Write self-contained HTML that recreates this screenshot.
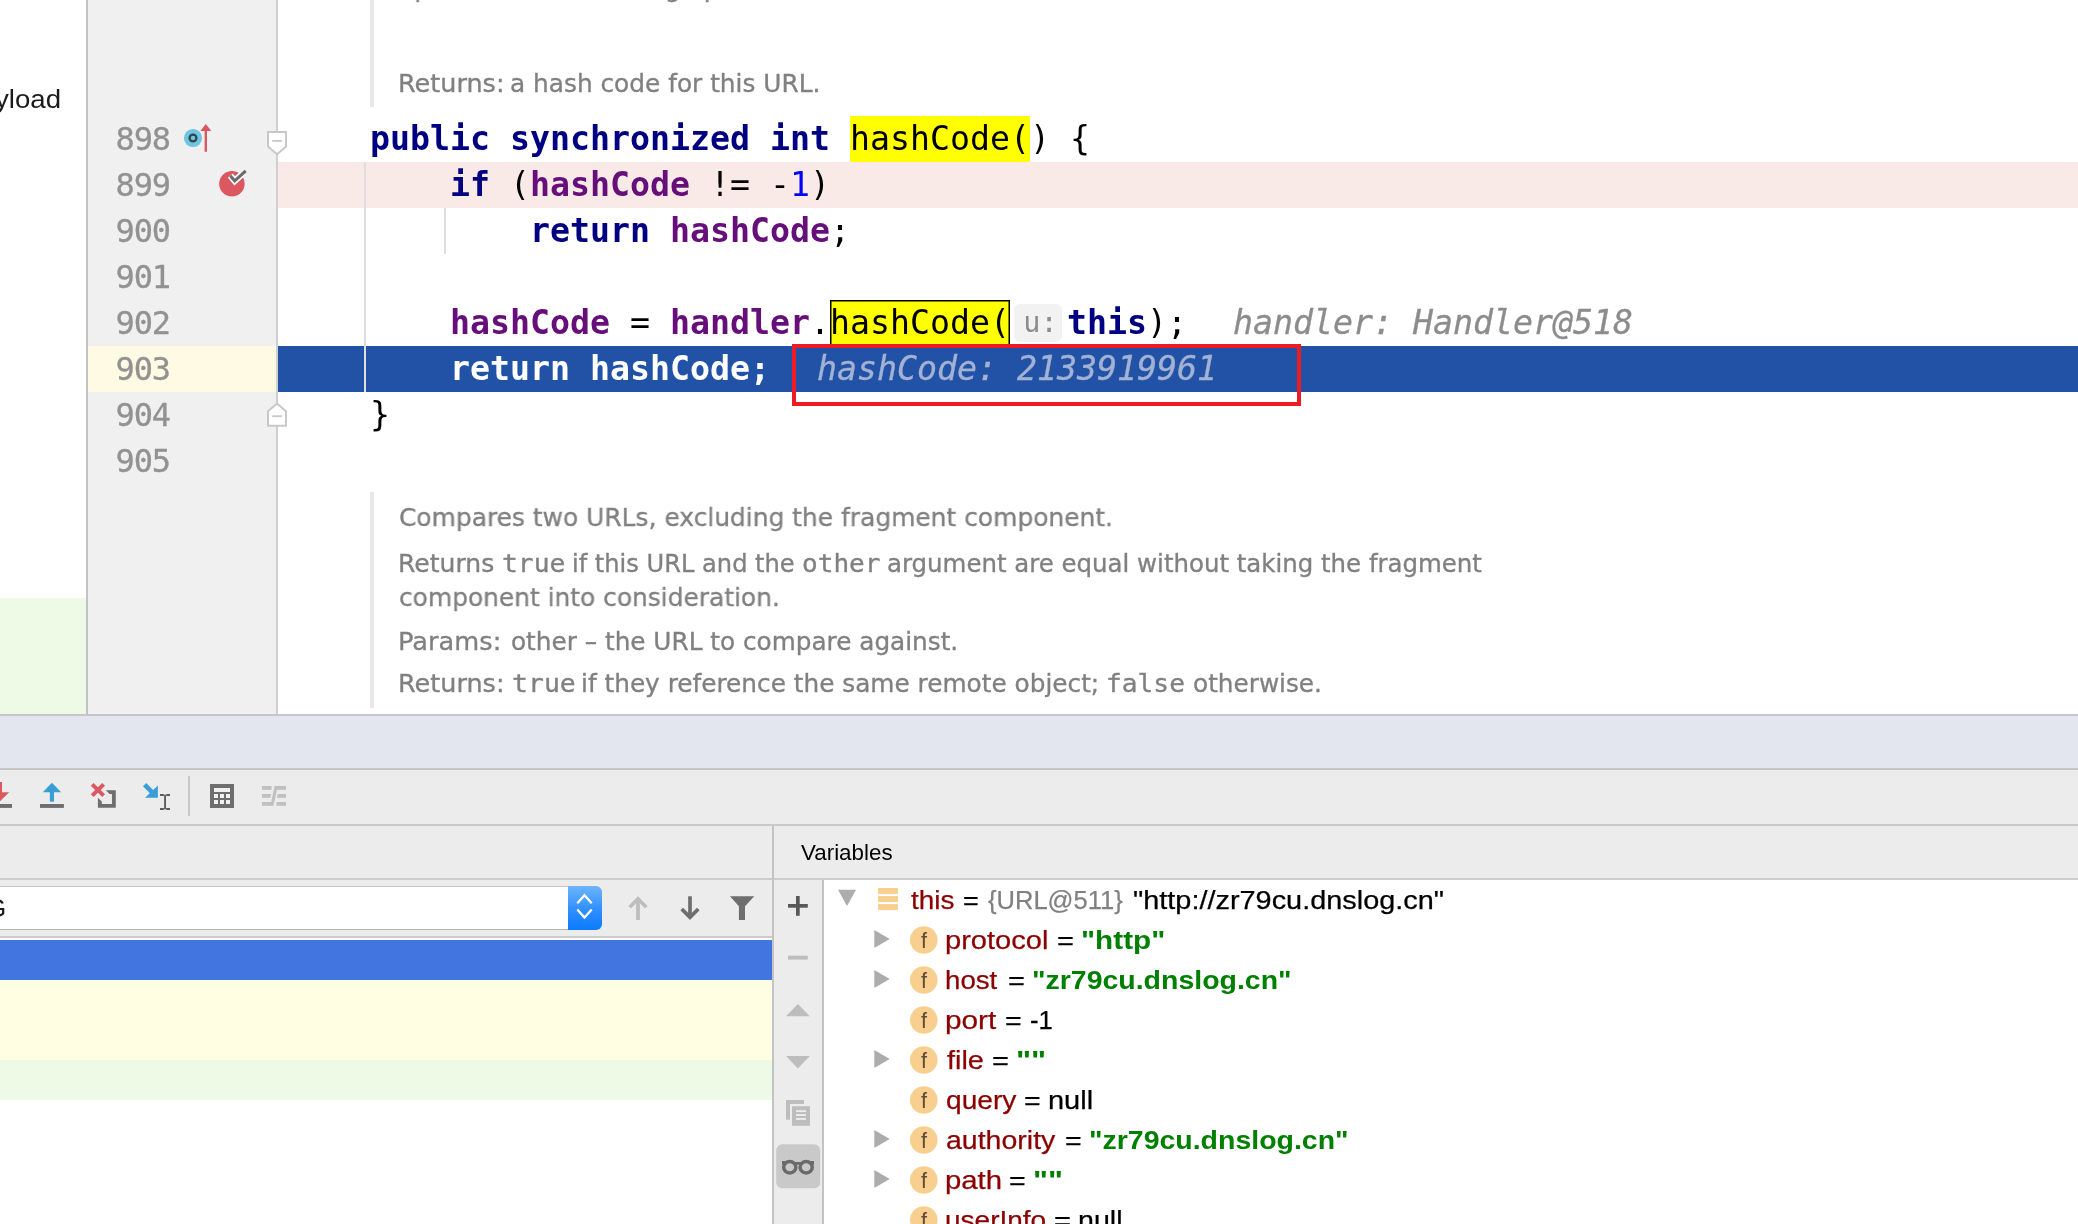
<!DOCTYPE html>
<html>
<head>
<meta charset="utf-8">
<title>URL.java - debugger</title>
<style>
html,body{margin:0;padding:0;}
body{width:2078px;height:1224px;overflow:hidden;position:relative;background:#fff;-webkit-font-smoothing:antialiased;will-change:transform;font-family:"Liberation Sans",sans-serif;}
.abs{position:absolute;}
.t{position:absolute;white-space:pre;transform-origin:0 0;}
.mono{font-family:"DejaVu Sans Mono","Liberation Mono",monospace;}
/* ---------- editor ---------- */
#leftpane{left:0;top:0;width:86px;height:714px;background:#fff;}
#gutter{left:86px;top:0;width:192px;height:714px;background:#f0f0f0;border-left:2px solid #c3c3c3;border-right:2px solid #cfcfcf;box-sizing:border-box;}
.ln{left:115.5px;width:60px;height:46px;line-height:46px;font-size:32px;letter-spacing:-1.1px;color:#929292;-webkit-text-stroke:0.3px #929292;white-space:pre;}
.code{left:370px;height:46px;line-height:46px;font-size:33.22px;white-space:pre;color:#000;}
.k{color:#000080;font-weight:bold;}
.f{color:#660e7a;font-weight:bold;}
.n{color:#0000ff;}
.hl{background:#ffff00;padding:3.4px 0 3.5px 0;}
.dbg{color:#8c8c8c;font-style:italic;-webkit-text-stroke:0.3px currentColor;}
#hl2{box-shadow:inset 0 0 0 1.5px #000;}
#hint{display:inline-block;vertical-align:top;margin:4px 5px 0 4px;width:48px;height:38px;line-height:38px;border-radius:6px;background:#f2f2f2;color:#8c8c8c;font-size:28.5px;text-align:center;box-sizing:border-box;padding-left:5px;}
.doc{color:#7f7f7f;font-size:25.5px;white-space:pre;line-height:34px;}
.doc .m{font-family:"DejaVu Sans Mono","Liberation Mono",monospace;font-size:25px;}
.docbar{left:370px;width:4px;background:#e8e8e8;}
.guide{width:2px;background:#dedede;}
/* ---------- bottom ---------- */
#band{left:0;top:714px;width:2078px;height:56px;background:#e3e6ee;border-top:2px solid #c6c6c8;border-bottom:2px solid #c6c6c6;box-sizing:border-box;}
#tb{left:0;top:770px;width:2078px;height:56px;background:#ececec;border-bottom:2px solid #c9c9c9;box-sizing:border-box;}
#hdr{left:0;top:826px;width:2078px;height:54px;background:#ececec;border-bottom:2px solid #cdcdcd;box-sizing:border-box;}
#frames{left:0;top:880px;width:772px;height:344px;background:#fff;}
#vdiv{left:772px;top:826px;width:2px;height:398px;background:#c4c4c4;}
#vtool{left:774px;top:880px;width:48px;height:344px;background:#ececec;border-right:2px solid #c3c3c3;box-sizing:content-box;}
#vars{left:824px;top:880px;width:1253px;height:344px;background:#fff;}
.row{left:0;height:40px;line-height:40px;font-size:26px;white-space:pre;color:#000;}
.vn{color:#8b0000;}
.vt{color:#808080;}
.vs{color:#008000;font-weight:bold;}
</style>
</head>
<body>
<!-- ===== editor area ===== -->
<div id="leftpane" class="abs"></div>
<div class="abs" style="left:0;top:598px;width:86px;height:116px;background:#eefae6;"></div>
<div id="gutter" class="abs"></div>
<div class="abs" style="left:88px;top:346px;width:188px;height:46px;background:#fffae3;"></div>

<!-- line backgrounds -->
<div class="abs" style="left:278px;top:162px;width:1800px;height:46px;background:#f9eae7;"></div>
<div class="abs" style="left:278px;top:346px;width:1800px;height:46px;background:#2252a6;"></div>
<!-- indent guides -->
<div class="abs guide" style="left:364px;top:162px;height:230px;"></div>
<div class="abs guide" style="left:444px;top:208px;height:46px;"></div>

<!-- doc comment bars -->
<div class="abs docbar" style="top:0;height:107px;"></div>
<div class="abs docbar" style="top:492px;height:216px;"></div>

<!-- line numbers -->
<div class="abs ln mono" style="top:116px;">898</div>
<div class="abs ln mono" style="top:162px;">899</div>
<div class="abs ln mono" style="top:208px;">900</div>
<div class="abs ln mono" style="top:254px;">901</div>
<div class="abs ln mono" style="top:300px;">902</div>
<div class="abs ln mono" style="top:346px;">903</div>
<div class="abs ln mono" style="top:392px;">904</div>
<div class="abs ln mono" style="top:438px;">905</div>

<!-- doc text -->
<span class="t" style="left:397.71px;top:66.64px;font-family:'DejaVu Sans','Liberation Sans',sans-serif;font-size:25.6px;line-height:33px;color:#808080;transform:scaleX(0.9961);-webkit-text-stroke:0.35px #808080;">Returns:</span>
<span class="t" style="left:510.46px;top:66.64px;font-family:'DejaVu Sans','Liberation Sans',sans-serif;font-size:25.6px;line-height:33px;color:#808080;transform:scaleX(0.9687);-webkit-text-stroke:0.35px #808080;">a hash code for this URL.</span>
<span class="t" style="left:398.63px;top:500.64px;font-family:'DejaVu Sans','Liberation Sans',sans-serif;font-size:25.6px;line-height:33px;color:#808080;transform:scaleX(0.9732);-webkit-text-stroke:0.35px #808080;">Compares two URLs, excluding the fragment component.</span>
<span class="t" style="left:397.64px;top:546.64px;font-family:'DejaVu Sans','Liberation Sans',sans-serif;font-size:25.6px;line-height:33px;color:#808080;transform:scaleX(0.9800);-webkit-text-stroke:0.35px #808080;">Returns</span>
<span class="t" style="left:501.84px;top:546.64px;font-family:'DejaVu Sans Mono','Liberation Mono',monospace;font-size:25.6px;line-height:33px;color:#808080;transform:scaleX(1.0276);-webkit-text-stroke:0.35px #808080;">true</span>
<span class="t" style="left:571.72px;top:546.64px;font-family:'DejaVu Sans','Liberation Sans',sans-serif;font-size:25.6px;line-height:33px;color:#808080;transform:scaleX(0.9425);-webkit-text-stroke:0.35px #808080;">if this URL and the</span>
<span class="t" style="left:801.66px;top:546.64px;font-family:'DejaVu Sans Mono','Liberation Mono',monospace;font-size:25.6px;line-height:33px;color:#808080;transform:scaleX(1.0189);-webkit-text-stroke:0.35px #808080;">other</span>
<span class="t" style="left:886.69px;top:546.64px;font-family:'DejaVu Sans','Liberation Sans',sans-serif;font-size:25.6px;line-height:33px;color:#808080;transform:scaleX(0.9548);-webkit-text-stroke:0.35px #808080;">argument are equal without taking the fragment</span>
<span class="t" style="left:398.63px;top:580.64px;font-family:'DejaVu Sans','Liberation Sans',sans-serif;font-size:25.6px;line-height:33px;color:#808080;transform:scaleX(0.9719);-webkit-text-stroke:0.35px #808080;">component into consideration.</span>
<span class="t" style="left:397.60px;top:624.64px;font-family:'DejaVu Sans','Liberation Sans',sans-serif;font-size:25.6px;line-height:33px;color:#808080;transform:scaleX(1.0020);-webkit-text-stroke:0.35px #808080;">Params:</span>
<span class="t" style="left:511.33px;top:624.64px;font-family:'DejaVu Sans','Liberation Sans',sans-serif;font-size:25.6px;line-height:33px;color:#808080;transform:scaleX(0.9659);-webkit-text-stroke:0.35px #808080;">other – the URL to compare against.</span>
<span class="t" style="left:397.61px;top:666.64px;font-family:'DejaVu Sans','Liberation Sans',sans-serif;font-size:25.6px;line-height:33px;color:#808080;transform:scaleX(0.9961);-webkit-text-stroke:0.35px #808080;">Returns:</span>
<span class="t" style="left:511.53px;top:666.64px;font-family:'DejaVu Sans Mono','Liberation Mono',monospace;font-size:25.6px;line-height:33px;color:#808080;transform:scaleX(1.0345);-webkit-text-stroke:0.35px #808080;">true</span>
<span class="t" style="left:581.06px;top:666.64px;font-family:'DejaVu Sans','Liberation Sans',sans-serif;font-size:25.6px;line-height:33px;color:#808080;transform:scaleX(0.9676);-webkit-text-stroke:0.35px #808080;">if they reference the same remote object;</span>
<span class="t" style="left:1105.55px;top:666.64px;font-family:'DejaVu Sans Mono','Liberation Mono',monospace;font-size:25.6px;line-height:33px;color:#808080;transform:scaleX(1.0243);-webkit-text-stroke:0.35px #808080;">false</span>
<span class="t" style="left:1192.53px;top:666.64px;font-family:'DejaVu Sans','Liberation Sans',sans-serif;font-size:25.6px;line-height:33px;color:#808080;transform:scaleX(0.9662);-webkit-text-stroke:0.35px #808080;">otherwise.</span>
<span class="t" style="left:398.63px;top:-27.86px;font-family:'DejaVu Sans','Liberation Sans',sans-serif;font-size:25.6px;line-height:33px;color:#808080;transform:scaleX(0.9680);-webkit-text-stroke:0.35px #808080;">operation is a blocking operation.</span>

<!-- code -->
<div class="abs code mono" style="top:116px;"><span class="k">public synchronized int</span> <span class="hl">hashCode(</span>) {</div>
<div class="abs code mono" style="top:162px;">    <span class="k">if</span> (<span class="f">hashCode</span> != -<span class="n">1</span>)</div>
<div class="abs code mono" style="top:208px;">        <span class="k">return</span> <span class="f">hashCode</span>;</div>
<div class="abs code mono" style="top:300px;">    <span class="f">hashCode</span> = <span class="f">handler</span>.<span class="hl" id="hl2">hashCode(</span><span id="hint">u:</span><span class="k">this</span>);</div>
<div class="abs code mono dbg" style="top:300px;left:1233px;">handler: Handler@518</div>
<div class="abs code mono" style="top:346px;color:#fff;font-weight:bold;">    return hashCode;</div>
<div class="abs code mono dbg" style="top:346px;left:817px;color:#a3b2d4;">hashCode: 2133919961</div>
<div class="abs code mono" style="top:392px;">}</div>
<!-- red annotation rect -->
<div class="abs" style="left:792px;top:344px;width:509px;height:62px;border:4px solid #ed1c24;box-sizing:border-box;"></div>

<!-- ===== bottom panel ===== -->
<div id="band" class="abs"></div>
<div id="tb" class="abs"></div>
<div id="hdr" class="abs"></div>
<div id="frames" class="abs"></div>
<div id="vtool" class="abs"></div>
<div id="vars" class="abs"></div>
<div id="vdiv" class="abs"></div>
<span class="t" style="left:801.00px;top:838.75px;font-family:'Liberation Sans',sans-serif;font-size:21.5px;line-height:28px;color:#000;transform:scaleX(1.0402);">Variables</span>
<span class="t" style="left:-4.85px;top:81.79px;font-family:'Liberation Sans',sans-serif;font-size:26px;line-height:34px;color:#1a1a1a;transform:scaleX(1.0630);">yload</span>

<!-- frames list -->
<div class="abs" style="left:0;top:940px;width:772px;height:40px;background:#4375e0;"></div>
<div class="abs" style="left:0;top:980px;width:772px;height:80px;background:#fffee3;"></div>
<div class="abs" style="left:0;top:1060px;width:772px;height:40px;background:#eef9e6;"></div>

<!-- dropdown row -->
<div class="abs" style="left:0;top:880px;width:772px;height:56px;background:#ececec;border-bottom:2px solid #cbcbcb;"></div>
<div class="abs" style="left:-10px;top:886px;width:578px;height:44px;background:#fff;border-top:1px solid #c4c4c4;border-bottom:1px solid #b4b4b4;box-sizing:border-box;"></div>
<div class="abs" style="left:568px;top:886px;width:34px;height:44px;border-radius:0 6px 6px 0;background:linear-gradient(#6db4fb,#2f8ffd 55%,#0a7aff);"></div>
<div class="abs" style="left:-14px;top:892px;font-size:26px;line-height:32px;color:#1a1a1a;">G</div>

<!-- variables rows -->
<span class="t" style="left:910.75px;top:883.19px;font-family:'Liberation Sans',sans-serif;font-size:26px;line-height:34px;color:#8b0000;transform:scaleX(1.0750);-webkit-text-stroke:0.25px #8b0000;">this</span>
<span class="t" style="left:963.46px;top:883.19px;font-family:'Liberation Sans',sans-serif;font-size:26px;line-height:34px;color:#000000;transform:scaleX(1.0385);-webkit-text-stroke:0.25px #000000;">=</span>
<span class="t" style="left:988.00px;top:883.19px;font-family:'Liberation Sans',sans-serif;font-size:26px;line-height:34px;color:#808080;transform:scaleX(0.9818);-webkit-text-stroke:0.25px #808080;">{URL@511}</span>
<span class="t" style="left:1133.14px;top:883.19px;font-family:'Liberation Sans',sans-serif;font-size:26px;line-height:34px;color:#000000;transform:scaleX(1.1106);-webkit-text-stroke:0.25px #000000;">"http://zr79cu.dnslog.cn"</span>
<span class="t" style="left:945.26px;top:923.19px;font-family:'Liberation Sans',sans-serif;font-size:26px;line-height:34px;color:#8b0000;transform:scaleX(1.1180);-webkit-text-stroke:0.25px #8b0000;">protocol</span>
<span class="t" style="left:1056.88px;top:923.19px;font-family:'Liberation Sans',sans-serif;font-size:26px;line-height:34px;color:#000000;transform:scaleX(1.1154);-webkit-text-stroke:0.25px #000000;">=</span>
<span class="t" style="left:1081.46px;top:923.19px;font-family:'Liberation Sans',sans-serif;font-size:26px;line-height:34px;color:#008000;transform:scaleX(1.1429);font-weight:700;">"http"</span>
<span class="t" style="left:945.37px;top:963.19px;font-family:'Liberation Sans',sans-serif;font-size:26px;line-height:34px;color:#8b0000;transform:scaleX(1.0638);-webkit-text-stroke:0.25px #8b0000;">host</span>
<span class="t" style="left:1007.63px;top:963.19px;font-family:'Liberation Sans',sans-serif;font-size:26px;line-height:34px;color:#000000;transform:scaleX(1.1154);-webkit-text-stroke:0.25px #000000;">=</span>
<span class="t" style="left:1032.06px;top:963.19px;font-family:'Liberation Sans',sans-serif;font-size:26px;line-height:34px;color:#008000;transform:scaleX(1.0951);font-weight:700;">"zr79cu.dnslog.cn"</span>
<span class="t" style="left:944.71px;top:1003.19px;font-family:'Liberation Sans',sans-serif;font-size:26px;line-height:34px;color:#8b0000;transform:scaleX(1.1453);-webkit-text-stroke:0.25px #8b0000;">port</span>
<span class="t" style="left:1005.15px;top:1003.19px;font-family:'Liberation Sans',sans-serif;font-size:26px;line-height:34px;color:#000000;transform:scaleX(1.0962);-webkit-text-stroke:0.25px #000000;">=</span>
<span class="t" style="left:1029.51px;top:1003.19px;font-family:'Liberation Sans',sans-serif;font-size:26px;line-height:34px;color:#000000;transform:scaleX(0.9881);-webkit-text-stroke:0.25px #000000;">-1</span>
<span class="t" style="left:947.00px;top:1043.19px;font-family:'Liberation Sans',sans-serif;font-size:26px;line-height:34px;color:#8b0000;transform:scaleX(1.1094);-webkit-text-stroke:0.25px #8b0000;">file</span>
<span class="t" style="left:991.88px;top:1043.19px;font-family:'Liberation Sans',sans-serif;font-size:26px;line-height:34px;color:#000000;transform:scaleX(1.1154);-webkit-text-stroke:0.25px #000000;">=</span>
<span class="t" style="left:1015.55px;top:1043.19px;font-family:'Liberation Sans',sans-serif;font-size:26px;line-height:34px;color:#008000;transform:scaleX(1.2262);font-weight:700;">""</span>
<span class="t" style="left:945.92px;top:1083.19px;font-family:'Liberation Sans',sans-serif;font-size:26px;line-height:34px;color:#8b0000;transform:scaleX(1.0820);-webkit-text-stroke:0.25px #8b0000;">query</span>
<span class="t" style="left:1023.90px;top:1083.19px;font-family:'Liberation Sans',sans-serif;font-size:26px;line-height:34px;color:#000000;transform:scaleX(1.0962);-webkit-text-stroke:0.25px #000000;">=</span>
<span class="t" style="left:1047.77px;top:1083.19px;font-family:'Liberation Sans',sans-serif;font-size:26px;line-height:34px;color:#000000;transform:scaleX(1.1149);-webkit-text-stroke:0.25px #000000;">null</span>
<span class="t" style="left:945.90px;top:1123.19px;font-family:'Liberation Sans',sans-serif;font-size:26px;line-height:34px;color:#8b0000;transform:scaleX(1.0960);-webkit-text-stroke:0.25px #8b0000;">authority</span>
<span class="t" style="left:1065.15px;top:1123.19px;font-family:'Liberation Sans',sans-serif;font-size:26px;line-height:34px;color:#000000;transform:scaleX(1.0962);-webkit-text-stroke:0.25px #000000;">=</span>
<span class="t" style="left:1089.06px;top:1123.19px;font-family:'Liberation Sans',sans-serif;font-size:26px;line-height:34px;color:#008000;transform:scaleX(1.0951);font-weight:700;">"zr79cu.dnslog.cn"</span>
<span class="t" style="left:944.74px;top:1163.19px;font-family:'Liberation Sans',sans-serif;font-size:26px;line-height:34px;color:#8b0000;transform:scaleX(1.1277);-webkit-text-stroke:0.25px #8b0000;">path</span>
<span class="t" style="left:1008.90px;top:1163.19px;font-family:'Liberation Sans',sans-serif;font-size:26px;line-height:34px;color:#000000;transform:scaleX(1.0962);-webkit-text-stroke:0.25px #000000;">=</span>
<span class="t" style="left:1032.57px;top:1163.19px;font-family:'Liberation Sans',sans-serif;font-size:26px;line-height:34px;color:#008000;transform:scaleX(1.2143);font-weight:700;">""</span>
<span class="t" style="left:944.85px;top:1203.19px;font-family:'Liberation Sans',sans-serif;font-size:26px;line-height:34px;color:#8b0000;transform:scaleX(1.0769);-webkit-text-stroke:0.25px #8b0000;">userInfo</span>
<span class="t" style="left:1054.38px;top:1203.19px;font-family:'Liberation Sans',sans-serif;font-size:26px;line-height:34px;color:#000000;transform:scaleX(1.1154);-webkit-text-stroke:0.25px #000000;">=</span>
<span class="t" style="left:1078.30px;top:1203.19px;font-family:'Liberation Sans',sans-serif;font-size:26px;line-height:34px;color:#000000;transform:scaleX(1.1014);-webkit-text-stroke:0.25px #000000;">null</span>

<!-- ICONS -->
<svg class="abs" id="ico" style="left:0;top:0;" width="2078" height="1224" viewBox="0 0 2078 1224">
<circle cx="193" cy="138" r="9.1" fill="#70c4e0"/><circle cx="193" cy="138" r="3.4" fill="none" stroke="#2e4450" stroke-width="2.3"/>
<rect x="204.6" y="130" width="2.4" height="21.8" fill="#db5860"/><polygon points="205.8,124 200.3,130.9 211.3,130.9" fill="#db5860"/>
<path d="M268 132H286V146.5L277 154.2L268 146.5Z" fill="#fff" stroke="#c8c8c8" stroke-width="2"/><rect x="272.2" y="140" width="9.8" height="1.8" fill="#c8c8c8"/>
<path d="M268 425.8H286V411.3L277 403.6L268 411.3Z" fill="#fff" stroke="#c8c8c8" stroke-width="2"/><rect x="272.2" y="415.3" width="9.8" height="1.8" fill="#c8c8c8"/>
<circle cx="231.9" cy="183.8" r="12.75" fill="#db5860"/><clipPath id="bpc"><circle cx="231.9" cy="183.8" r="14.5"/></clipPath><polyline clip-path="url(#bpc)" points="230.3,175.7 234.7,180.8 245.7,170.9" fill="none" stroke="#fff" stroke-width="6.5" stroke-linejoin="miter"/><polyline points="230.3,175.7 234.7,180.8 245.7,170.9" fill="none" stroke="#6a6a6a" stroke-width="3"/>
<rect x="-2" y="782" width="4" height="11" fill="#db5860"/><polygon points="-9.2,792.3 9.2,792.3 0,801.2" fill="#db5860"/><rect x="-12" y="804" width="24" height="3.9" fill="#6e6e6e"/>
<polygon points="51.9,782.7 42.8,792.2 61.15,792.2" fill="#389fd6"/><rect x="49.85" y="792" width="4.15" height="9.7" fill="#389fd6"/><rect x="40" y="804" width="23.9" height="3.9" fill="#6e6e6e"/>
<path d="M92.2 784.3L103.6 795.6M103.6 784.3L92.2 795.6" stroke="#db5860" stroke-width="4" fill="none"/>
<polygon points="105.8,790.15 115.8,790.15 115.8,807.85 97.9,807.85 97.9,797.7 101.8,801.5 101.8,804 111.95,804 111.95,794 109.6,794" fill="#6e6e6e"/>
<path d="M144.6 784.7L153.5 793.6" stroke="#389fd6" stroke-width="4.6" fill="none"/><polygon points="157.9,785.4 157.9,797.85 145,797.85" fill="#389fd6"/>
<rect x="164.1" y="794.7" width="1.9" height="14.6" fill="#5c5c5c"/><rect x="160" y="794" width="3.9" height="2" fill="#5c5c5c"/><rect x="166.2" y="794" width="3.8" height="2" fill="#5c5c5c"/><rect x="160" y="808" width="3.9" height="2" fill="#5c5c5c"/><rect x="166.2" y="808" width="3.8" height="2" fill="#5c5c5c"/>
<rect x="188" y="776" width="2" height="40" fill="#c8c8c8"/>
<rect x="210" y="784" width="24" height="24" fill="#6e6e6e"/><rect x="214" y="788" width="16" height="4" fill="#f0f0f0"/><rect x="214" y="794" width="4" height="4" fill="#f0f0f0"/><rect x="214" y="800" width="4" height="4" fill="#f0f0f0"/><rect x="220" y="794" width="4" height="4" fill="#f0f0f0"/><rect x="220" y="800" width="4" height="4" fill="#f0f0f0"/><rect x="226" y="794" width="4" height="4" fill="#f0f0f0"/><rect x="226" y="800" width="4" height="4" fill="#f0f0f0"/>
<rect x="262" y="786" width="9.6" height="3.8" fill="#c0c0c0"/><rect x="276.4" y="786" width="9.6" height="3.8" fill="#c0c0c0"/><rect x="262" y="794" width="9.6" height="3.8" fill="#c0c0c0"/><rect x="276.4" y="794" width="9.6" height="3.8" fill="#c0c0c0"/><rect x="262" y="802" width="9.6" height="3.8" fill="#c0c0c0"/><rect x="276.4" y="802" width="9.6" height="3.8" fill="#c0c0c0"/><path d="M271.7 806.4L276.4 785.4" stroke="#ececec" stroke-width="6.4" fill="none"/><path d="M271.9 805.8L276.2 786" stroke="#c0c0c0" stroke-width="3" fill="none"/><rect x="268" y="802" width="4.6" height="3.8" fill="#c0c0c0"/><rect x="275.6" y="786" width="4.6" height="3.8" fill="#c0c0c0"/>
<polyline points="577.3,903.3 584.5,895.3 591.7,903.3" fill="none" stroke="#fff" stroke-width="2.3"/><polyline points="577.3,909.5 584.5,917.5 591.7,909.5" fill="none" stroke="#fff" stroke-width="2.3"/>
<path d="M638 898.5V920M629.7 907.2L638 898.8L646.3 907.2" fill="none" stroke="#bdbdbd" stroke-width="3.7"/>
<path d="M690 896.3V917.5M681.7 909L690 917.4L698.3 909" fill="none" stroke="#6e6e6e" stroke-width="3.7"/>
<polygon points="730,896.3 754.25,896.3 745,906.3 745,919.9 738.9,919.9 738.9,906.3" fill="#6e6e6e"/>
<rect x="788" y="904" width="19.8" height="3.7" fill="#595959"/><rect x="796" y="896" width="3.7" height="19.8" fill="#595959"/>
<rect x="788" y="955.7" width="19.8" height="3.9" fill="#bdbdbd"/>
<polygon points="797.9,1004 786,1016.2 809.8,1016.2" fill="#bdbdbd"/><polygon points="786,1056 809.8,1056 797.9,1068.4" fill="#bdbdbd"/>
<path d="M786 1100H804V1104H790V1119.8H786Z" fill="#bdbdbd"/><rect x="792" y="1106.2" width="18" height="19.6" fill="#bdbdbd"/><rect x="796" y="1110.2" width="10" height="1.9" fill="#ececec"/><rect x="796" y="1114.1" width="10" height="1.9" fill="#ececec"/><rect x="796" y="1118" width="10" height="1.9" fill="#ececec"/>
<rect x="776.2" y="1144.2" width="44" height="44" rx="6" fill="#c9c9c9"/>
<g fill="none" stroke="#6a6a6a" stroke-width="3.5"><ellipse cx="789.75" cy="1167.2" rx="6.1" ry="5.7"/><ellipse cx="806.15" cy="1167.2" rx="6.1" ry="5.7"/></g><rect x="794" y="1162" width="8" height="2.8" fill="#6a6a6a"/><rect x="782" y="1161" width="3.4" height="3.8" fill="#6a6a6a"/><rect x="810.6" y="1161" width="3.4" height="3.8" fill="#6a6a6a"/>
<polygon points="838,889.8 856.1,889.8 847,905.9" fill="#adadad"/>
<polygon points="874.3,929.9 889.7,939 874.3,948.1" fill="#adadad"/>
<polygon points="874.3,969.9 889.7,979 874.3,988.1" fill="#adadad"/>
<polygon points="874.3,1049.9 889.7,1059 874.3,1068.1" fill="#adadad"/>
<polygon points="874.3,1129.9 889.7,1139 874.3,1148.1" fill="#adadad"/>
<polygon points="874.3,1169.9 889.7,1179 874.3,1188.1" fill="#adadad"/>
<rect x="878" y="888" width="20" height="5.9" fill="#f8cf8e"/><rect x="878" y="896.05" width="20" height="5.9" fill="#f8cf8e"/><rect x="878" y="904.1" width="20" height="5.9" fill="#f8cf8e"/>
<circle cx="923.8" cy="940" r="13.8" fill="#f8cf8e"/><text x="923.9" y="948" text-anchor="middle" font-family="Liberation Sans, sans-serif" font-size="21.6" fill="#5e4c38">f</text>
<circle cx="923.8" cy="980" r="13.8" fill="#f8cf8e"/><text x="923.9" y="988" text-anchor="middle" font-family="Liberation Sans, sans-serif" font-size="21.6" fill="#5e4c38">f</text>
<circle cx="923.8" cy="1020" r="13.8" fill="#f8cf8e"/><text x="923.9" y="1028" text-anchor="middle" font-family="Liberation Sans, sans-serif" font-size="21.6" fill="#5e4c38">f</text>
<circle cx="923.8" cy="1060" r="13.8" fill="#f8cf8e"/><text x="923.9" y="1068" text-anchor="middle" font-family="Liberation Sans, sans-serif" font-size="21.6" fill="#5e4c38">f</text>
<circle cx="923.8" cy="1100" r="13.8" fill="#f8cf8e"/><text x="923.9" y="1108" text-anchor="middle" font-family="Liberation Sans, sans-serif" font-size="21.6" fill="#5e4c38">f</text>
<circle cx="923.8" cy="1140" r="13.8" fill="#f8cf8e"/><text x="923.9" y="1148" text-anchor="middle" font-family="Liberation Sans, sans-serif" font-size="21.6" fill="#5e4c38">f</text>
<circle cx="923.8" cy="1180" r="13.8" fill="#f8cf8e"/><text x="923.9" y="1188" text-anchor="middle" font-family="Liberation Sans, sans-serif" font-size="21.6" fill="#5e4c38">f</text>
<circle cx="923.8" cy="1220" r="13.8" fill="#f8cf8e"/><text x="923.9" y="1228" text-anchor="middle" font-family="Liberation Sans, sans-serif" font-size="21.6" fill="#5e4c38">f</text>
</svg>

</body>
</html>
